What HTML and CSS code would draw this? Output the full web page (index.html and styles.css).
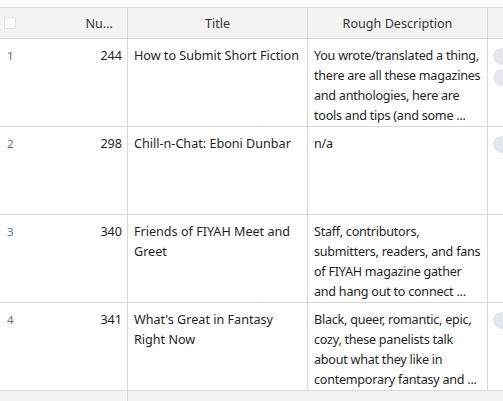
FILE: index.html
```html
<!DOCTYPE html>
<html>
<head>
<meta charset="utf-8">
<link rel="stylesheet" href="styles.css">
</head>
<body>
<div class="grid">
  <div class="hcell first">
    <span class="check"></span>
    <span class="hnum">Nu...</span>
  </div>
  <div class="hcell center">Title</div>
  <div class="hcell center">Rough Description</div>
  <div class="hcell"></div>

  <div class="cell first"><span class="idx">1</span><span class="num">244</span></div>
  <div class="cell">How to Submit Short Fiction</div>
  <div class="cell desc">You wrote/translated a thing,<br>there are all these magazines<br>and anthologies, here are<br>tools and tips (and some ...</div>
  <div class="cell tags"><span class="pill"></span><span class="pill"></span></div>

  <div class="cell first"><span class="idx">2</span><span class="num">298</span></div>
  <div class="cell">Chill-n-Chat: Eboni Dunbar</div>
  <div class="cell desc">n/a</div>
  <div class="cell tags"><span class="pill"></span></div>

  <div class="cell first"><span class="idx">3</span><span class="num">340</span></div>
  <div class="cell">Friends of FIYAH Meet and Greet</div>
  <div class="cell desc">Staff, contributors,<br>submitters, readers, and fans<br>of FIYAH magazine gather<br>and hang out to connect ...</div>
  <div class="cell tags"></div>

  <div class="cell first"><span class="idx">4</span><span class="num">341</span></div>
  <div class="cell">What's Great in Fantasy Right Now</div>
  <div class="cell desc">Black, queer, romantic, epic,<br>cozy, these panelists talk<br>about what they like in<br>contemporary fantasy and ...</div>
  <div class="cell tags"><span class="pill blue"></span></div>

  <div class="fcell"></div>
  <div class="fcell line"></div>
  <div class="fcell"></div>
  <div class="fcell"></div>
</div>
</body>
</html>
```
FILE: styles.css
```css
html, body {
  margin: 0;
  padding: 0;
  background: #ffffff;
  overflow: hidden;
}
body {
  font-family: "Noto Sans", "Open Sans", sans-serif;
  font-size: 12.6px;
  color: #1f1f1f;
  padding-top: 7px;
}
.grid {
  display: grid;
  grid-template-columns: 127px 180px 180px 1fr;
  grid-template-rows: 31px 88px 88px 88px 88px 20px;
  border-top: 1px solid #dedede;
  width: 503px;
}
.hcell {
  background: #f3f3f3;
  border-bottom: 1px solid #d8d8d8;
  border-left: 1px solid #d8d8d8;
  display: flex;
  align-items: center;
  color: #333;
  box-sizing: border-box;
}
.hcell.first {
  border-left: none;
  justify-content: space-between;
  padding: 0 14px 0 4px;
}
.hcell.center {
  justify-content: center;
}
.check {
  width: 10px;
  height: 10px;
  border: 1px solid #e2e2e2;
  background: #fafafa;
  border-radius: 1px;
}
.cell {
  border-bottom: 1px solid #dadada;
  border-left: 1px solid #d8d8d8;
  padding: 7px 6px 0 6px;
  line-height: 20px;
  box-sizing: border-box;
  overflow: hidden;
}
.cell.desc {
  white-space: nowrap;
  padding-right: 2px;
  letter-spacing: -0.25px;
}
.cell.first {
  border-left: none;
  display: flex;
  justify-content: space-between;
  padding: 7px 5px 0 7px;
}
.idx {
  color: #5b7096;
  font-size: 11.5px;
}
.cell.tags {
  display: flex;
  flex-direction: column;
  gap: 4px;
  padding: 9px 0 0 5px;
}
.pill {
  display: block;
  width: 40px;
  height: 17px;
  border-radius: 9px;
  background: #e5e8f0;
  position: relative;
}
.pill.blue::after {
  content: "";
  position: absolute;
  left: 10px;
  top: 4px;
  width: 3px;
  height: 9px;
  background: #5a7fd6;
}
.fcell {
  background: #f3f3f3;
}
.fcell.line {
  border-left: 1px solid #d8d8d8;
}
```
